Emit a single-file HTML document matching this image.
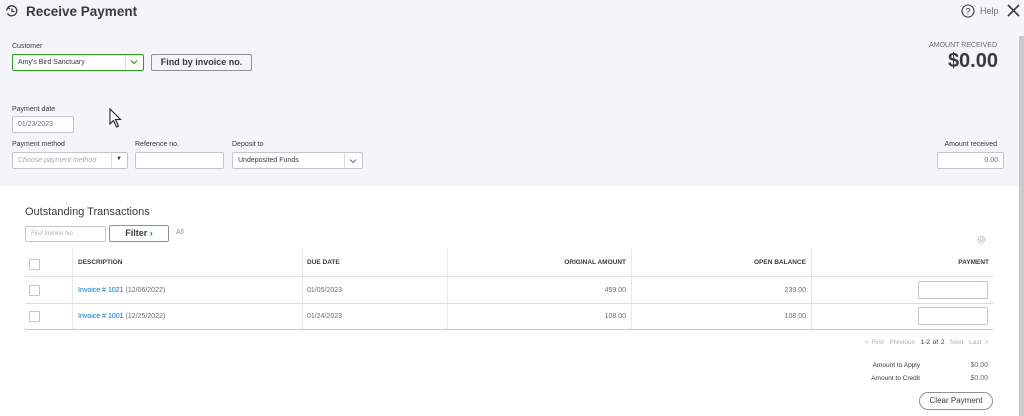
<!DOCTYPE html>
<html><head><style>
*{box-sizing:border-box;margin:0;padding:0}
body{width:1024px;height:416px;overflow:hidden;font-family:"Liberation Sans",sans-serif;background:#fff;position:relative;color:#393a3d}
.top{position:absolute;left:0;top:0;width:1024px;height:186px;background:#f4f5f8}
.a{position:absolute}
.lbl{font-size:7px;color:#393a3d}
.in{position:absolute;background:#fff;border:1px solid #c4c6cb;border-radius:2px;font-size:7px;color:#6b6c72;padding-left:5px;display:flex;align-items:center}
.th{font-size:6.5px;font-weight:bold;color:#393a3d}
.td{font-size:7px;color:#6b6c72}
.lnk{color:#0077c5}
.cb{position:absolute;width:11px;height:11px;border:1px solid #c4c6cb;background:#fff;border-radius:1px}
.hl{position:absolute;height:1px;background:#dcdde0}
.vl{position:absolute;width:1px;background:#e6e7ea}
</style></head><body>
<div class="top"></div>
<div class="a" style="left:1019px;top:36px;width:5px;height:380px;background:#c9cacd"></div>
<svg class="a" style="left:5px;top:4px" width="14" height="14" viewBox="0 0 14 14" fill="none" stroke="#393a3d" stroke-width="1.3"><path d="M3 3.5A5 5 0 1 1 2.5 9.5"/><path d="M1.5 6.5L3 3.5 5 5"/><path d="M7 4.5V7.5H9.5"/></svg>
<div class="a" style="left:26px;top:4px;font-size:13.5px;font-weight:bold;color:#393a3d">Receive Payment</div>
<svg class="a" style="left:961px;top:4px" width="14" height="14" viewBox="0 0 14 14"><circle cx="7" cy="7" r="6" fill="none" stroke="#393a3d" stroke-width="1.1"/><text x="7" y="10.5" font-size="9" text-anchor="middle" fill="#393a3d" font-family="Liberation Sans">?</text></svg>
<div class="a" style="left:980px;top:6px;font-size:9px;color:#6b6c72">Help</div>
<svg class="a" style="left:1006px;top:3px" width="15" height="15" viewBox="0 0 15 15" stroke="#393a3d" stroke-width="1.6"><path d="M2 2L13 13M13 2L2 13"/></svg>

<div class="a lbl" style="left:12px;top:43px">Customer</div>
<div class="in" style="left:12px;top:54px;width:132px;height:17px;border:1px solid #2ca01c;color:#393a3d">Amy's Bird Sanctuary</div>
<div class="a" style="left:125px;top:55px;width:1px;height:15px;background:#dcdde0"></div>
<svg class="a" style="left:130px;top:59px" width="8" height="6" viewBox="0 0 8 6"><path d="M1 1.5L4 4.5 7 1.5" fill="none" stroke="#2ca01c" stroke-width="1.2"/></svg>
<div class="a" style="left:151px;top:54px;width:101px;height:17px;border:1px solid #8d9096;border-radius:2px;background:#f4f5f8;font-size:9px;font-weight:bold;text-align:center;line-height:15px">Find by invoice no.</div>

<div class="a lbl" style="left:12px;top:106px">Payment date</div>
<div class="in" style="left:12px;top:116px;width:62px;height:17px">01/23/2023</div>
<svg class="a" style="left:109px;top:108px" width="14" height="20" viewBox="0 0 14 20"><path d="M1 1V16L4.5 12.5 7.5 19 9.5 18 6.5 11.5H11.5Z" fill="#fff" stroke="#222" stroke-width="1.1"/></svg>

<div class="a lbl" style="left:12px;top:141px">Payment method</div>
<div class="in" style="left:12px;top:152px;width:116px;height:17px;color:#a8aab0;font-style:italic">Choose payment method</div>
<div class="a" style="left:111px;top:153px;width:1px;height:15px;background:#dcdde0"></div>
<div class="a" style="left:116px;top:156px;font-size:6px">▼</div>
<div class="a lbl" style="left:135px;top:141px">Reference no.</div>
<div class="in" style="left:135px;top:152px;width:89px;height:17px"></div>
<div class="a lbl" style="left:232px;top:141px">Deposit to</div>
<div class="in" style="left:232px;top:152px;width:131px;height:17px;color:#393a3d">Undeposited Funds</div>
<div class="a" style="left:344px;top:153px;width:1px;height:15px;background:#dcdde0"></div>
<svg class="a" style="left:349px;top:158px" width="8" height="6" viewBox="0 0 8 6"><path d="M1 1.5L4 4.5 7 1.5" fill="none" stroke="#6b6c72" stroke-width="1"/></svg>

<div class="a" style="left:900px;top:42px;width:97px;text-align:right;font-size:7px;color:#6b6c72">AMOUNT RECEIVED</div>
<div class="a" style="left:900px;top:50px;width:98px;text-align:right;font-size:20px;font-weight:bold;color:#393a3d">$0.00</div>
<div class="a" style="left:900px;top:141px;width:97px;text-align:right;font-size:7px">Amount received</div>
<div class="in" style="left:937px;top:152px;width:67px;height:17px;justify-content:flex-end;padding-right:5px">0.00</div>

<div class="a" style="left:25px;top:206px;font-size:11px;color:#393a3d">Outstanding Transactions</div>
<div class="in" style="left:25px;top:226px;width:81px;height:16px;color:#b0b2b7;font-style:italic;font-size:6px">Find Invoice No.</div>
<div class="a" style="left:109px;top:225px;width:60px;height:17px;border:1px solid #8d9096;border-radius:2px;background:#fff;font-size:9px;font-weight:bold;text-align:center;line-height:15px">Filter <span style="color:#0077c5">›</span></div>
<div class="a" style="left:176px;top:229px;font-size:7px;color:#8d9096">All</div>
<svg class="a" style="left:976px;top:234px" width="11" height="11" viewBox="0 0 11 11"><circle cx="5.5" cy="5.5" r="3.5" fill="none" stroke="#c4c6cb" stroke-width="1.5" stroke-dasharray="1.5 1"/><circle cx="5.5" cy="5.5" r="1.5" fill="none" stroke="#c4c6cb"/></svg>

<div class="vl" style="left:72px;top:248px;height:82px"></div>
<div class="vl" style="left:302px;top:248px;height:82px"></div>
<div class="vl" style="left:447px;top:248px;height:82px"></div>
<div class="vl" style="left:631px;top:248px;height:82px"></div>
<div class="vl" style="left:811px;top:248px;height:82px"></div>
<div class="hl" style="left:25px;top:276px;width:968px"></div>
<div class="hl" style="left:25px;top:303px;width:968px"></div>
<div class="hl" style="left:25px;top:329px;width:968px;background:#c4c6cb"></div>

<div class="cb" style="left:29px;top:259px"></div>
<div class="a th" style="left:78px;top:259px">DESCRIPTION</div>
<div class="a th" style="left:307px;top:259px">DUE DATE</div>
<div class="a th" style="left:500px;top:259px;width:126px;text-align:right">ORIGINAL AMOUNT</div>
<div class="a th" style="left:680px;top:259px;width:126px;text-align:right">OPEN BALANCE</div>
<div class="a th" style="left:860px;top:259px;width:129px;text-align:right">PAYMENT</div>

<div class="cb" style="left:29px;top:285px"></div>
<div class="a td" style="left:78px;top:287px"><span class="lnk">Invoice # 1021</span> (12/06/2022)</div>
<div class="a td" style="left:307px;top:287px">01/05/2023</div>
<div class="a td" style="left:500px;top:287px;width:126px;text-align:right">459.00</div>
<div class="a td" style="left:680px;top:287px;width:126px;text-align:right">239.00</div>
<div class="in" style="left:918px;top:281px;width:70px;height:18px"></div>

<div class="cb" style="left:29px;top:311px"></div>
<div class="a td" style="left:78px;top:313px"><span class="lnk">Invoice # 1001</span> (12/25/2022)</div>
<div class="a td" style="left:307px;top:313px">01/24/2023</div>
<div class="a td" style="left:500px;top:313px;width:126px;text-align:right">108.00</div>
<div class="a td" style="left:680px;top:313px;width:126px;text-align:right">108.00</div>
<div class="in" style="left:918px;top:307px;width:70px;height:18px"></div>

<div class="a" style="left:800px;top:339px;width:188px;text-align:right;font-size:6.5px;color:#b0b2b7;word-spacing:1px">&lt; First &nbsp;Previous &nbsp;<span style="color:#393a3d">1-2 of 2</span> &nbsp;Next &nbsp;Last &gt;</div>
<div class="a" style="left:840px;top:362px;width:80px;text-align:right;font-size:6.5px;color:#393a3d">Amount to Apply</div>
<div class="a" style="left:940px;top:362px;width:48px;text-align:right;font-size:7px;color:#6b6c72">$0.00</div>
<div class="a" style="left:840px;top:375px;width:80px;text-align:right;font-size:6.5px;color:#393a3d">Amount to Credit</div>
<div class="a" style="left:940px;top:375px;width:48px;text-align:right;font-size:7px;color:#6b6c72">$0.00</div>
<div class="a" style="left:919px;top:392px;width:74px;height:18px;border:1px solid #8d9096;border-radius:10px;font-size:8px;text-align:center;line-height:16px;color:#393a3d">Clear Payment</div>
</body></html>
